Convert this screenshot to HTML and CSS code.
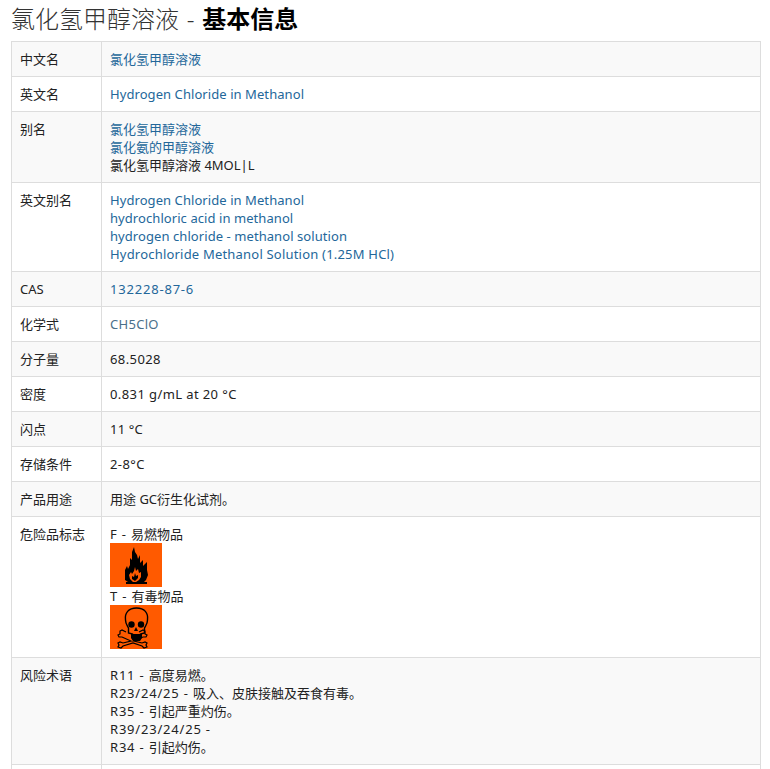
FILE: index.html
```html
<!DOCTYPE html>
<html lang="zh">
<head>
<meta charset="utf-8">
<title>氯化氢甲醇溶液 - 基本信息</title>
<link rel="stylesheet" href="styles.css">
</head>
<body>
<h2 class="title">氯化氢甲醇溶液 <span class="dash">-</span> <b>基本信息</b></h2>
<table class="info">
<tr><th>中文名</th><td><a href="#">氯化氢甲醇溶液</a></td></tr>
<tr><th>英文名</th><td><a href="#" class="lat">Hydrogen Chloride in Methanol</a></td></tr>
<tr><th>别名</th><td><a href="#">氯化氢甲醇溶液</a><br><a href="#">氯化氨的甲醇溶液</a><br>氯化氢甲醇溶液 4MOL|L</td></tr>
<tr><th>英文别名</th><td><a href="#" class="lat">Hydrogen Chloride in Methanol</a><br><a href="#" class="lat">hydrochloric acid in methanol</a><br><a href="#" class="lat">hydrogen chloride - methanol solution</a><br><a href="#" class="mid">Hydrochloride Methanol Solution (1.25M HCl)</a></td></tr>
<tr><th>CAS</th><td><a href="#" class="num">132228-87-6</a></td></tr>
<tr><th>化学式</th><td><a href="#" class="muted">CH5ClO</a></td></tr>
<tr><th>分子量</th><td><span class="wide">68.5028</span></td></tr>
<tr><th>密度</th><td><span class="wide">0.831 g/mL at 20 °C</span></td></tr>
<tr><th>闪点</th><td><span class="mid">11 °C</span></td></tr>
<tr><th>存储条件</th><td><span class="wide">2-8°C</span></td></tr>
<tr><th>产品用途</th><td>用途 GC衍生化试剂。</td></tr>
<tr><th>危险品标志</th><td><span class="num">F - </span>易燃物品
<svg class="hazard" viewBox="0 0 52 44" role="img" aria-label="易燃"><rect width="52" height="44" fill="#ff5a00"/><path fill="#000" d="M24 4l1 5 2 3 1 4 2-4 0 8 3-3 0 6 2-2 2-2 0 8 1 5-2 5-2 2h3v2H16v-2h2l-3-2 0-10 2-4 1 3 2-4 0-7 2 2 0-8z"/><path fill="#ff5a00" d="M25 24l1 4 2-2 1 4 2-1 0 5-2 3-3 2h-3l-3-3-1-4 2-3 1 2 2-3z"/><path fill="#000" d="M25 30l1 3 2-1 0 3-3 3-3-2 0-3 2 1z"/></svg>
<span class="num">T - </span>有毒物品
<svg class="hazard" viewBox="0 0 52 44" role="img" aria-label="有毒"><rect width="52" height="44" fill="#ff5a00"/><path fill="none" stroke="#000" stroke-width="1.4" d="M26.500 3c-8 0-12 5-11 12 0 4 2 6 3 8l0 5 4 1 0 3h8l0-3 4-1 0-5c1-2 3-4 3-8 1-7-3-12-11-12z"/><circle cx="21.500" cy="19.500" r="3.200" fill="#000"/><circle cx="31" cy="19.500" r="3.200" fill="#000"/><path fill="#000" d="M26 22l2 4h-4z"/><path fill="#000" d="M21 29l11 0 0 4-2 3h-7l-2-3z"/><path fill="none" stroke="#000" stroke-width="1.200" d="M16 27l-4-2-2 1 0 3-2 1 1 2 3 0 9 4-8 2-3-1-2 1 1 2-1 2 3 1 2-2 10-3 9 3 2 2 3-1-1-2 1-2-2-1-3 1-8-2 9-4 3 0 1-2-2-1 0-3-2-1-4 2"/></svg></td></tr>
<tr><th>风险术语</th><td><span class="num">R11 - </span>高度易燃。<br><span class="num">R23/24/25 - </span>吸入、皮肤接触及吞食有毒。<br><span class="num">R35 - </span>引起严重灼伤。<br><span class="num">R39/23/24/25 - </span><br><span class="num">R34 - </span>引起灼伤。</td></tr>
<tr class="last"><th></th><td></td></tr>
</table>
</body>
</html>
```
FILE: styles.css
```css
html, body {
  margin: 0;
  padding: 0;
  height: 769px;
  overflow: hidden;
  background: #fff;
}
body {
  padding: 0 9px 0 11px;
  font: 13px/18px "Noto Sans", "Noto Sans CJK SC", sans-serif;
  color: #222;
}
.title {
  margin: 0;
  padding: 4px 0 7px;
  font-size: 24px;
  line-height: 30px;
  font-weight: 300;
  color: #333;
  font-family: "Noto Sans", "Noto Sans CJK SC", sans-serif;
}
.dash {
  margin: 0 1.5px;
}
.title b {
  font-weight: 700;
  color: #000;
}
.info {
  width: 750px;
  border-collapse: collapse;
  table-layout: fixed;
}
.info th, .info td {
  border: 1px solid #ddd;
  padding: 8px;
  text-align: left;
  vertical-align: top;
  font-weight: 400;
}
.info th {
  width: 73px;
}
.info tr:nth-child(odd) {
  background: #f9f9f9;
}
.info a {
  color: #23679a;
  text-decoration: none;
}
.info a.muted {
  color: #4a6f8a;
  letter-spacing: 0.3px;
}
.lat {
  letter-spacing: 0.07px;
}
.mid {
  letter-spacing: 0.2px;
}
.wide {
  letter-spacing: 0.4px;
}
.num {
  letter-spacing: 0.8px;
}
.hazard {
  display: block;
  width: 52px;
  height: 44px;
}
.last th, .last td {
  height: 18px;
}
```
